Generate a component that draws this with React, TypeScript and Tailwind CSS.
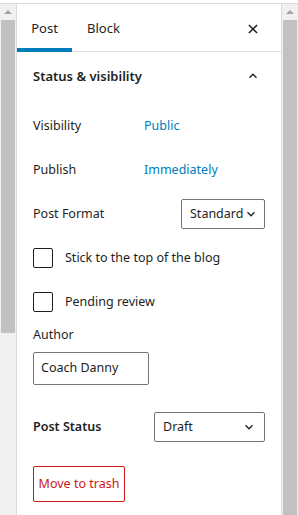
import React from "react";

const Chevron = ({ up = false }: { up?: boolean }) => (
  <svg width="14" height="14" viewBox="0 0 24 24" fill="none" stroke="#1e1e1e" strokeWidth="2.2" style={{ transform: up ? "rotate(180deg)" : undefined }}>
    <path d="M6 9l6 6 6-6" />
  </svg>
);

const Scrollbar = ({ left }: { left?: boolean }) => (
  <div className={`w-[17px] bg-[#f0f0f0] flex flex-col items-center ${left ? "border-r border-[#dcdcdc]" : "border-l border-[#dcdcdc]"}`}>
    <div className="h-[16px] flex items-center justify-center">
      <div className="w-0 h-0 border-l-[4px] border-r-[4px] border-b-[4px] border-l-transparent border-r-transparent border-b-[#a3a3a3]" />
    </div>
    <div className={`w-[14px] bg-[#c1c1c1] ${left ? "h-[313px]" : "flex-1"}`} />
  </div>
);

export default function App() {
  return (
    <div className="w-[298px] h-[515px] overflow-hidden bg-white flex flex-col text-[#1e1e1e] text-[12.5px]" style={{ fontFamily: "'Noto Sans', 'Open Sans', sans-serif" }}>
      <div className="h-[4px] border-b border-[#dcdcdc] bg-white shrink-0" />
      <div className="flex flex-1 min-h-0">
        <Scrollbar left />
        <div className="flex-1 flex flex-col bg-white">
          <div className="h-[48px] flex items-stretch border-b border-[#e0e0e0] relative text-[13px]">
            <div className="w-[55px] flex items-center justify-center relative">
              <span className="mt-[2px]">Post</span>
              <div className="absolute left-0 right-0 bottom-[-1px] h-[4px] bg-[#007cba]" />
            </div>
            <div className="flex items-center pl-[15px]">
              <span className="mt-[2px]">Block</span>
            </div>
            <div className="flex-1" />
            <div className="flex items-center pr-[21px]">
              <svg width="14" height="14" viewBox="0 0 24 24" stroke="#1e1e1e" strokeWidth="2.6" className="mt-[2px]">
                <path d="M5 5l14 14M19 5L5 19" />
              </svg>
            </div>
          </div>
          <div className="px-[16px]">
            <div className="h-[50px] flex items-center justify-between">
              <span className="font-semibold text-[13px]">Status &amp; visibility</span>
              <span className="mr-[5px] mt-[-2px]"><Chevron up /></span>
            </div>
            <div className="h-[44px] flex items-center mt-[2px]">
              <span className="w-[111px]">Visibility</span>
              <span className="text-[#007cba]">Public</span>
            </div>
            <div className="h-[44px] flex items-center">
              <span className="w-[111px]">Publish</span>
              <span className="text-[#007cba]">Immediately</span>
            </div>
            <div className="h-[44px] flex items-center justify-between">
              <span>Post Format</span>
              <div className="w-[84px] h-[30px] border border-[#757575] rounded-[2px] flex items-center justify-between pl-[8px] pr-[6px]">
                <span>Standard</span>
                <Chevron />
              </div>
            </div>
            <div className="h-[44px] flex items-center">
              <div className="w-[20px] h-[20px] border-[1.5px] border-[#1e1e1e] rounded-[2px] mr-[12px]" />
              <span>Stick to the top of the blog</span>
            </div>
            <div className="h-[44px] flex items-center">
              <div className="w-[20px] h-[20px] border-[1.5px] border-[#1e1e1e] rounded-[2px] mr-[12px]" />
              <span>Pending review</span>
            </div>
            <div className="mt-[2px] leading-[18px]">Author</div>
            <div className="mt-[8px] w-[116px] h-[33px] border border-[#757575] rounded-[2px] flex items-center pl-[7px]">Coach Danny</div>
            <div className="mt-[27px] flex items-center justify-between h-[30px]">
              <span className="font-semibold">Post Status</span>
              <div className="w-[111px] h-[30px] border border-[#757575] rounded-[2px] flex items-center justify-between pl-[8px] pr-[8px]">
                <span>Draft</span>
                <Chevron />
              </div>
            </div>
            <div className="mt-[24px] w-[92px] h-[36px] border border-[#cc1818] rounded-[2px] flex items-center justify-center text-[#cc1818]">Move to trash</div>
          </div>
        </div>
        <Scrollbar />
      </div>
    </div>
  );
}
